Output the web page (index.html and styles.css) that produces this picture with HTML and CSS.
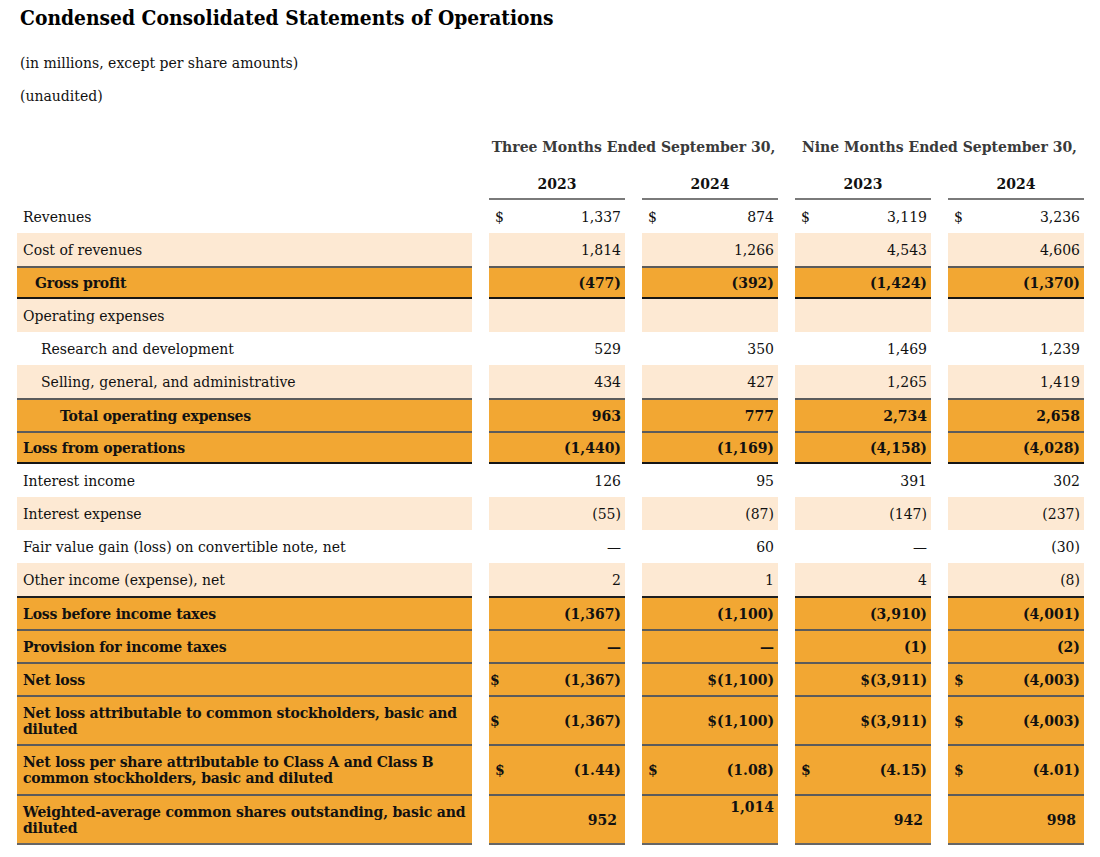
FILE: index.html
```html
<!DOCTYPE html>
<html lang="en">
<head>
<meta charset="utf-8">
<title>Condensed Consolidated Statements of Operations</title>
<link rel="stylesheet" href="styles.css">
</head>
<body>
<div class="page">
  <h1 class="title">Condensed Consolidated Statements of Operations</h1>
  <p class="note note-first">(in millions, except per share amounts)</p>
  <p class="note">(unaudited)</p>

  <table class="stmt">
    <colgroup>
      <col class="c-label"><col class="c-val"><col class="c-val"><col class="c-val"><col class="c-val">
    </colgroup>
    <thead>
      <tr class="period">
        <th></th>
        <th colspan="2">Three Months Ended September 30,</th>
        <th colspan="2">Nine Months Ended September 30,</th>
      </tr>
      <tr class="years">
        <th class="blank"></th>
        <th>2023</th><th>2024</th><th>2023</th><th>2024</th>
      </tr>
    </thead>
    <tbody>
      <tr class="r">
        <td class="lab">Revenues</td>
        <td><div class="v"><span>$</span><span>1,337</span></div></td>
        <td><div class="v"><span>$</span><span>874</span></div></td>
        <td><div class="v"><span>$</span><span>3,119</span></div></td>
        <td><div class="v"><span>$</span><span>3,236</span></div></td>
      </tr>
      <tr class="r lt">
        <td class="lab">Cost of revenues</td>
        <td><div class="v"><span></span><span>1,814</span></div></td>
        <td><div class="v"><span></span><span>1,266</span></div></td>
        <td><div class="v"><span></span><span>4,543</span></div></td>
        <td><div class="v"><span></span><span>4,606</span></div></td>
      </tr>
      <tr class="r hl end">
        <td class="lab ind1">Gross profit</td>
        <td><div class="v"><span></span><span>(477)</span></div></td>
        <td><div class="v"><span></span><span>(392)</span></div></td>
        <td><div class="v"><span></span><span>(1,424)</span></div></td>
        <td><div class="v"><span></span><span>(1,370)</span></div></td>
      </tr>
      <tr class="r lt">
        <td class="lab">Operating expenses</td>
        <td></td><td></td><td></td><td></td>
      </tr>
      <tr class="r">
        <td class="lab ind2">Research and development</td>
        <td><div class="v"><span></span><span>529</span></div></td>
        <td><div class="v"><span></span><span>350</span></div></td>
        <td><div class="v"><span></span><span>1,469</span></div></td>
        <td><div class="v"><span></span><span>1,239</span></div></td>
      </tr>
      <tr class="r lt">
        <td class="lab ind2">Selling, general, and administrative</td>
        <td><div class="v"><span></span><span>434</span></div></td>
        <td><div class="v"><span></span><span>427</span></div></td>
        <td><div class="v"><span></span><span>1,265</span></div></td>
        <td><div class="v"><span></span><span>1,419</span></div></td>
      </tr>
      <tr class="r hl">
        <td class="lab ind3">Total operating expenses</td>
        <td><div class="v"><span></span><span>963</span></div></td>
        <td><div class="v"><span></span><span>777</span></div></td>
        <td><div class="v"><span></span><span>2,734</span></div></td>
        <td><div class="v"><span></span><span>2,658</span></div></td>
      </tr>
      <tr class="r hl end">
        <td class="lab">Loss from operations</td>
        <td><div class="v"><span></span><span>(1,440)</span></div></td>
        <td><div class="v"><span></span><span>(1,169)</span></div></td>
        <td><div class="v"><span></span><span>(4,158)</span></div></td>
        <td><div class="v"><span></span><span>(4,028)</span></div></td>
      </tr>
      <tr class="r">
        <td class="lab">Interest income</td>
        <td><div class="v"><span></span><span>126</span></div></td>
        <td><div class="v"><span></span><span>95</span></div></td>
        <td><div class="v"><span></span><span>391</span></div></td>
        <td><div class="v"><span></span><span>302</span></div></td>
      </tr>
      <tr class="r lt">
        <td class="lab">Interest expense</td>
        <td><div class="v"><span></span><span>(55)</span></div></td>
        <td><div class="v"><span></span><span>(87)</span></div></td>
        <td><div class="v"><span></span><span>(147)</span></div></td>
        <td><div class="v"><span></span><span>(237)</span></div></td>
      </tr>
      <tr class="r">
        <td class="lab">Fair value gain (loss) on convertible note, net</td>
        <td><div class="v"><span></span><span>—</span></div></td>
        <td><div class="v"><span></span><span>60</span></div></td>
        <td><div class="v"><span></span><span>—</span></div></td>
        <td><div class="v"><span></span><span>(30)</span></div></td>
      </tr>
      <tr class="r lt">
        <td class="lab">Other income (expense), net</td>
        <td><div class="v"><span></span><span>2</span></div></td>
        <td><div class="v"><span></span><span>1</span></div></td>
        <td><div class="v"><span></span><span>4</span></div></td>
        <td><div class="v"><span></span><span>(8)</span></div></td>
      </tr>
      <tr class="r hl dark-top">
        <td class="lab">Loss before income taxes</td>
        <td><div class="v"><span></span><span>(1,367)</span></div></td>
        <td><div class="v"><span></span><span>(1,100)</span></div></td>
        <td><div class="v"><span></span><span>(3,910)</span></div></td>
        <td><div class="v"><span></span><span>(4,001)</span></div></td>
      </tr>
      <tr class="r hl">
        <td class="lab">Provision for income taxes</td>
        <td><div class="v"><span></span><span>—</span></div></td>
        <td><div class="v"><span></span><span>—</span></div></td>
        <td><div class="v"><span></span><span>(1)</span></div></td>
        <td><div class="v"><span></span><span>(2)</span></div></td>
      </tr>
      <tr class="r hl">
        <td class="lab">Net loss</td>
        <td><div class="v tight"><span>$</span><span>(1,367)</span></div></td>
        <td><div class="v"><span></span><span>$(1,100)</span></div></td>
        <td><div class="v"><span></span><span>$(3,911)</span></div></td>
        <td><div class="v"><span>$</span><span>(4,003)</span></div></td>
      </tr>
      <tr class="r2a hl">
        <td class="lab">Net loss attributable to common stockholders, basic and diluted</td>
        <td><div class="v tight"><span>$</span><span>(1,367)</span></div></td>
        <td><div class="v"><span></span><span>$(1,100)</span></div></td>
        <td><div class="v"><span></span><span>$(3,911)</span></div></td>
        <td><div class="v"><span>$</span><span>(4,003)</span></div></td>
      </tr>
      <tr class="r2b hl">
        <td class="lab">Net loss per share attributable to Class A and Class B common stockholders, basic and diluted</td>
        <td><div class="v"><span>$</span><span>(1.44)</span></div></td>
        <td><div class="v"><span>$</span><span>(1.08)</span></div></td>
        <td><div class="v"><span>$</span><span>(4.15)</span></div></td>
        <td><div class="v"><span>$</span><span>(4.01)</span></div></td>
      </tr>
      <tr class="r2c hl last">
        <td class="lab">Weighted-average common shares outstanding, basic and diluted</td>
        <td><div class="v"><span></span><span class="pr">952</span></div></td>
        <td class="top"><div class="v"><span></span><span>1,014</span></div></td>
        <td><div class="v"><span></span><span class="pr">942</span></div></td>
        <td><div class="v"><span></span><span class="pr">998</span></div></td>
      </tr>
    </tbody>
  </table>
</div>
</body>
</html>
```

FILE: styles.css
```css
html, body {
  margin: 0;
  padding: 0;
  background: #ffffff;
  overflow-x: hidden;
}

body {
  font-family: "DejaVu Serif", "Liberation Serif", serif;
  font-size: 14px;
  color: #111111;
}

.page {
  padding-top: 6px;
}

.title {
  margin: 0 0 0 20px;
  font-family: "DejaVu Serif Condensed", "DejaVu Serif", serif;
  font-stretch: condensed;
  font-size: 20.8px;
  line-height: 24px;
  font-weight: bold;
  color: #000000;
}

.note {
  margin: 0 0 0 20px;
  font-size: 14px;
  line-height: 20px;
  height: 33px;
  display: flex;
  align-items: center;
}

.note-first {
  margin-top: 16px;
}

.stmt {
  border-collapse: separate;
  border-spacing: 17px 0;
  width: 1101px;
  table-layout: fixed;
  margin-top: 10px;
}

.c-label { width: 455px; }
.c-val { width: 136px; }

.stmt th,
.stmt td {
  padding: 0;
  font-weight: normal;
}

.stmt th {
  box-sizing: border-box;
}

.period th {
  height: 44px;
  padding-top: 6px;
  line-height: 16px;
  font-weight: bold;
  color: #3a3a3a;
  text-align: center;
  vertical-align: middle;
}

.years th {
  height: 34px;
  padding-top: 4px;
  line-height: 16px;
  font-weight: bold;
  color: #111111;
  text-align: center;
  vertical-align: middle;
  border-bottom: 2px solid #7a7a7a;
}

.years th.blank {
  border-bottom: none;
}

.r { height: 33px; }
.r2a { height: 49px; }
.r2b { height: 50px; }
.r2c { height: 51px; }

.stmt td {
  vertical-align: middle;
  line-height: 16px;
}

.lab {
  padding-left: 6px !important;
  padding-right: 2px !important;
}

.hl .lab {
  letter-spacing: -0.2px;
}

.ind1 { padding-left: 18px !important; }
.ind2 { padding-left: 24px !important; }
.ind3 { padding-left: 43px !important; }

.v {
  display: flex;
  justify-content: space-between;
  align-items: center;
  padding: 0 4px 0 6px;
}

.v.tight {
  padding-left: 1px;
}

.pr {
  padding-right: 4px;
}

.lt td {
  background: #fde9d3;
}

.hl td {
  background: #f2a733;
  font-weight: bold;
  border-top: 2px solid #5b5b5b;
}

.hl.end td {
  border-bottom: 2px solid #151515;
}

.hl.dark-top td {
  border-top-color: #1e1e1e;
}

.hl.last td {
  border-bottom: 2px solid #666666;
}

.stmt td.top {
  vertical-align: top;
  padding-top: 3px;
}
```
